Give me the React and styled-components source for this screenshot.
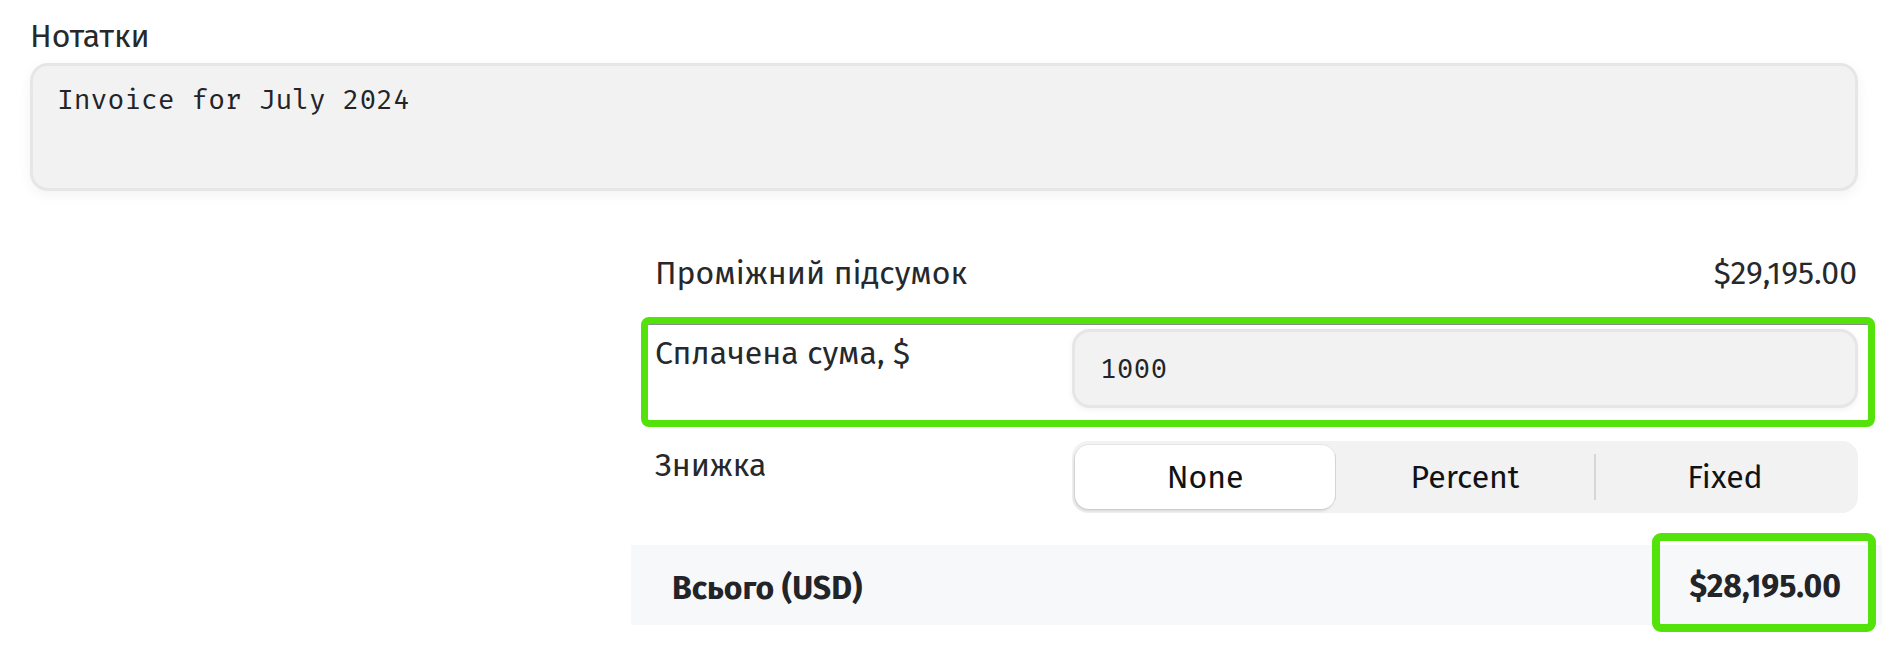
import React from 'react'
import styled, { createGlobalStyle } from 'styled-components'

const GlobalStyle = createGlobalStyle`
  * { box-sizing: border-box; }
  body {
    margin: 0;
    background: #ffffff;
    font-family: "Fira Sans", "Open Sans", sans-serif;
    color: #26282c;
  }
`

const Page = styled.div`
  width: 1896px;
  min-height: 654px;
  padding: 12px 0 0 30px;
`

const NotesLabel = styled.label`
  display: block;
  font-size: 32px;
  line-height: 48px;
  margin-bottom: 3px;
`

const NotesArea = styled.textarea`
  display: block;
  width: 1828px;
  height: 128px;
  resize: none;
  border: 3px solid #e6e6e6;
  border-radius: 18px;
  background: #f2f2f2;
  padding: 13px 24px;
  font-family: "Fira Mono", "DejaVu Sans Mono", monospace;
  font-size: 28px;
  line-height: 42px;
  color: #222428;
  box-shadow: 0 4px 14px rgba(0, 0, 0, 0.05);
  outline: none;
`

const Summary = styled.div`
  width: 1251px;
  margin: 58px 0 0 601px;
  display: flex;
  flex-direction: column;
`

const SubtotalRow = styled.div`
  display: flex;
  justify-content: space-between;
  padding: 0 25px 0 24px;
  font-size: 32px;
  line-height: 48px;
`

const FieldRow = styled.div`
  display: flex;
  align-items: flex-start;
  margin: ${p => p.$first ? '27px' : '16px'} 14px 0 17px;
  padding: 5px 10px 12px 7px;
  border-radius: 1px;
  ${p => p.$highlight && `
    outline: 7px solid #53e30a;
    box-shadow: inset 0 1px 0 rgba(0, 0, 0, 0.45), 0 1px 0 rgba(0, 0, 0, 0.35);
  `}
`

const FieldLabel = styled.div`
  width: 417px;
  flex-shrink: 0;
  font-size: 32px;
  line-height: 48px;
`

const AmountInput = styled.input`
  width: 786px;
  height: 79px;
  border: 3px solid #e6e6e6;
  border-radius: 18px;
  background: #f2f2f2;
  padding: 0 25px;
  font-family: "Fira Mono", "DejaVu Sans Mono", monospace;
  font-size: 28px;
  line-height: 42px;
  color: #222428;
  box-shadow: 0 2px 6px rgba(0, 0, 0, 0.05);
  outline: none;
`

const Segmented = styled.div`
  width: 786px;
  height: 72px;
  display: flex;
  align-items: stretch;
  padding: 4px 3px;
  border-radius: 16px;
  background: #f2f2f2;
`

const Segment = styled.button`
  flex: 1;
  position: relative;
  border: none;
  border-radius: 14px;
  background: ${p => p.$active ? '#ffffff' : 'transparent'};
  box-shadow: ${p => p.$active ? '0 0 0 1px rgba(0,0,0,0.05), -1px 2px 3px rgba(0,0,0,0.12)' : 'none'};
  font-family: "Fira Sans", "Open Sans", sans-serif;
  font-size: 32px;
  line-height: 48px;
  color: #111214;
  padding: 0;
`

const Divider = styled.span`
  align-self: center;
  width: 2px;
  height: 46px;
  background: ${p => p.$faint ? '#e4e4e4' : '#d6d6d6'};
  flex-shrink: 0;
  margin: 0 -1px;
`

const TotalRow = styled.div`
  display: flex;
  align-items: flex-start;
  justify-content: space-between;
  height: 80px;
  margin-top: 20px;
  padding: 0 14px 0 41px;
  background: #f7f8fa;
  font-size: 32px;
  line-height: 48px;
  font-weight: 700;
  color: #222428;
`

const TotalLabel = styled.span`
  margin-top: 19px;
`

const TotalValue = styled.div`
  height: 83px;
  margin-top: -4px;
  padding: 21px 27px 0 30px;
  outline: 8px solid #53e30a;
  border-radius: 1px;
  box-shadow: 0 1px 0 rgba(0, 0, 0, 0.35);
`

const discountOptions = ['None', 'Percent', 'Fixed']

export default function App() {
  return (
    <>
      <GlobalStyle />
      <Page>
        <NotesLabel>Нотатки</NotesLabel>
        <NotesArea readOnly value="Invoice for July 2024" />

        <Summary>
          <SubtotalRow>
            <span>Проміжний підсумок</span>
            <span>$29,195.00</span>
          </SubtotalRow>

          <FieldRow $first $highlight>
            <FieldLabel>Сплачена сума, $</FieldLabel>
            <AmountInput readOnly value="1000" />
          </FieldRow>

          <FieldRow>
            <FieldLabel>Знижка</FieldLabel>
            <Segmented>
              {discountOptions.map((opt, i) => (
                <React.Fragment key={opt}>
                  {i > 0 && <Divider $faint={i === 1} />}
                  <Segment $active={i === 0}>{opt}</Segment>
                </React.Fragment>
              ))}
            </Segmented>
          </FieldRow>

          <TotalRow>
            <TotalLabel>Всього (USD)</TotalLabel>
            <TotalValue>$28,195.00</TotalValue>
          </TotalRow>
        </Summary>
      </Page>
    </>
  )
}
